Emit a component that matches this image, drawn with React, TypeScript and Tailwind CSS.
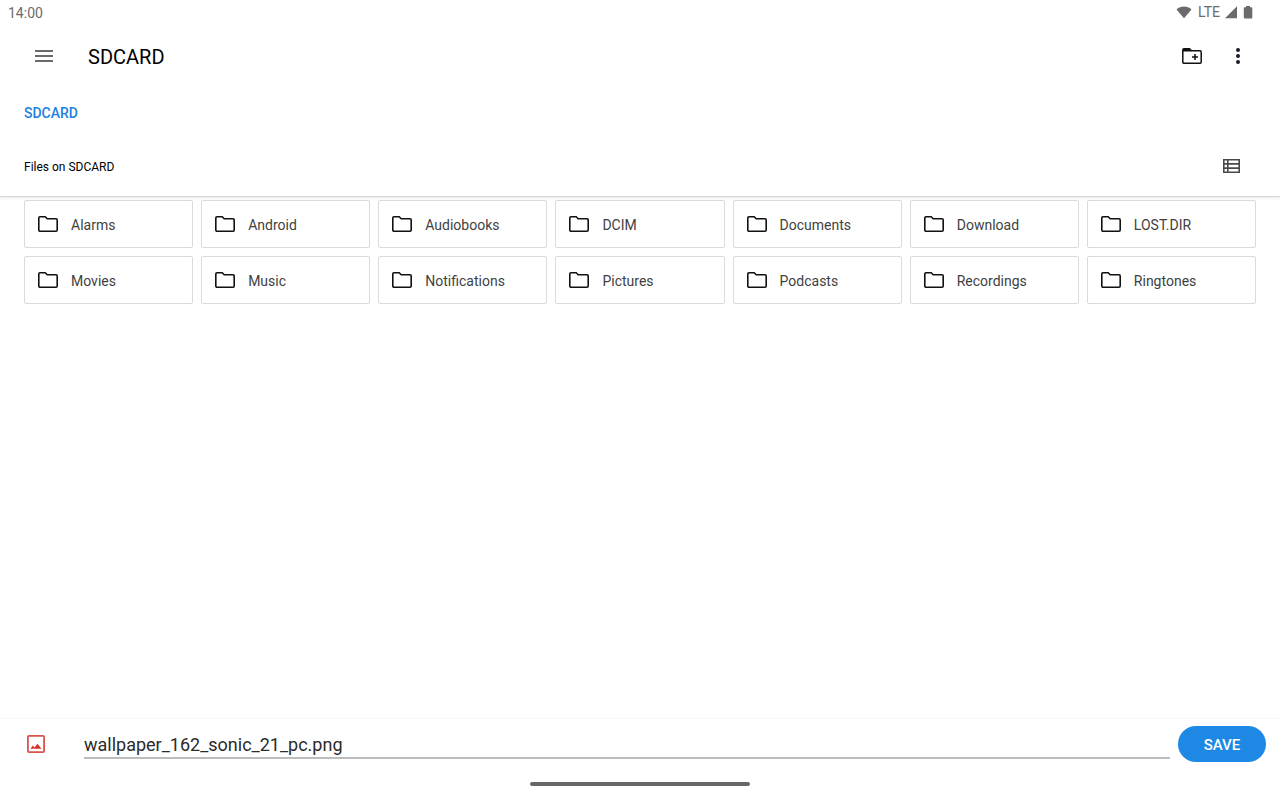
import { useState } from "react";

const folders = [
    "Alarms",
    "Android",
    "Audiobooks",
    "DCIM",
    "Documents",
    "Download",
    "LOST.DIR",
    "Movies",
    "Music",
    "Notifications",
    "Pictures",
    "Podcasts",
    "Recordings",
    "Ringtones",
];

const FolderIcon = () => (
    <svg viewBox="0 0 24 24" className="size-6 shrink-0 text-[#111111]" fill="none" stroke="currentColor" strokeWidth="1.6" aria-hidden="true">
        <path d="M4 4.8h5.2l2 2H20c.7 0 1.2.5 1.2 1.2v10c0 .7-.5 1.2-1.2 1.2H4c-.7 0-1.2-.5-1.2-1.2V6c0-.7.5-1.2 1.2-1.2z" />
    </svg>
);

const StatusBar = () => (
    <div className="flex h-6 items-center justify-between pl-2 pr-[26px] text-sm text-[#6b6b6b]">
        <span className="pt-0.5">14:00</span>
        <div className="flex items-center">
            <svg viewBox="0 0 16 14" className="mr-1.5 h-3.5 w-4" fill="currentColor" role="img" aria-label="Wi-Fi">
                <path d="M8 13.3.5 4.4C2.6 2.5 5.2 1.6 8 1.6s5.4.9 7.5 2.8z" />
            </svg>
            <span className="mr-1">LTE</span>
            <svg viewBox="0 0 14 14" className="mr-1 size-3.5" fill="currentColor" role="img" aria-label="Signal">
                <path d="M1 13.2 13 1.2v12z" />
            </svg>
            <svg viewBox="0 0 12 14" className="h-3.5 w-3" fill="currentColor" role="img" aria-label="Battery">
                <path d="M4 1h4v1.2h1.3c.6 0 1 .4 1 1v9.300c0 .5-.4.900-.9.900H2.700c-.5 0-.9-.4-.9-.9V3.200c0-.6.400-1 1-1H4z" />
            </svg>
        </div>
    </div>
);

const Toolbar = () => (
    <header className="flex h-16 items-center pl-8 pr-[30px]">
        <button type="button" aria-label="Open navigation" className="text-[#6b6b6b]">
            <svg viewBox="0 0 24 24" className="size-6" fill="currentColor">
                <path d="M3 6h18v2H3zM3 11h18v2H3zM3 16h18v2H3z" />
            </svg>
        </button>
        <h1 className="ml-8 flex-1 pt-0.5 text-xl text-black">SDCARD</h1>
        <button type="button" aria-label="New folder" className="mr-[22px] text-[#111111]">
            <svg viewBox="0 0 24 24" className="size-6" fill="none" stroke="currentColor" strokeWidth="1.5">
                <path d="M4 4.8h5.5l2 2H20c.7 0 1.2.5 1.2 1.2v10c0 .7-.5 1.2-1.2 1.2H4c-.7 0-1.2-.5-1.2-1.2V6c0-.7.5-1.2 1.2-1.2z" />
                <path d="M3 5h6.5l2 2.5H3z" fill="currentColor" stroke="none" />
                <path d="M15 10v6M12 13h6" />
            </svg>
        </button>
        <button type="button" aria-label="More options" className="text-[#1c1b2a]">
            <svg viewBox="0 0 24 24" className="size-6" fill="currentColor">
                <circle cx="12" cy="6" r="2" />
                <circle cx="12" cy="12" r="2" />
                <circle cx="12" cy="18" r="2" />
            </svg>
        </button>
    </header>
);

const App = () => {
    const [fileName, setFileName] = useState("wallpaper_162_sonic_21_pc.png");

    return (
        <div className="flex min-h-screen flex-col bg-white font-[Roboto,sans-serif]">
            <StatusBar />
            <Toolbar />

            <nav aria-label="Breadcrumb" className="flex h-12 items-center px-6 pt-0.5 text-sm font-medium">
                <a href="#" className="text-[#1e80e0]">SDCARD</a>
            </nav>

            <div className="flex h-[61px] items-center justify-between border-b border-[#d6d6d6] pl-6 pr-9 shadow-[0_2px_2px_rgba(0,0,0,0.06)]">
                <h2 className="pt-0.5 text-xs text-black">Files on SDCARD</h2>
                <button type="button" aria-label="List view" className="text-[#4a484c]">
                    <svg viewBox="0 0 24 24" className="size-6" fill="none" stroke="currentColor" strokeWidth="1.6">
                        <path d="M3.8 5.8h15.4v12.4H3.8zM4 9.9h15M4 14.1h15M7.800 6v12" />
                    </svg>
                </button>
            </div>

            <main className="flex-1 px-6 pt-[3px]">
                <ul className="grid grid-cols-7 gap-2">
                    {folders.map((name) => (
                        <li key={name}>
                            <button
                                type="button"
                                className="flex h-12 w-full items-center gap-[11px] rounded-xs border border-[#dadada] px-[11px] text-left text-sm text-[#3f3f3f]"
                            >
                                <FolderIcon />
                                <span className="pt-0.5">{name}</span>
                            </button>
                        </li>
                    ))}
                </ul>
            </main>

            <footer className="border-t border-[#f8f8f8]">
                <form className="flex items-center pl-6 pr-3.5 pt-[7px]" onSubmit={(e) => e.preventDefault()}>
                    <svg viewBox="0 0 24 24" className="size-6 shrink-0" aria-hidden="true">
                        <rect x="3.9" y="3.9" width="16.2" height="16.2" rx="1" fill="none" stroke="#d9534f" strokeWidth="1.8" />
                        <path d="M6.5 16.8l2.300-3.200 1.800 2 2.900-3.900 4 5.100z" fill="#d93025" />
                    </svg>
                    <input
                        type="text"
                        aria-label="File name"
                        value={fileName}
                        onChange={(e) => setFileName(e.target.value)}
                        className="ml-9 mr-2 h-[30px] min-w-0 flex-1 border-b-2 border-[#bcbcbc] pt-0.5 text-lg text-[#2b2b2b] outline-none"
                    />
                    <button type="submit" className="h-9 w-[88px] rounded-full bg-[#1e88e5] pt-0.5 text-[15px] font-medium text-white">
                        SAVE
                    </button>
                </form>
                <div className="flex h-[38px] items-center justify-center pt-1.5">
                    <div className="h-1 w-[220px] rounded-full bg-[#666666]" />
                </div>
            </footer>
        </div>
    );
};

export default App;
